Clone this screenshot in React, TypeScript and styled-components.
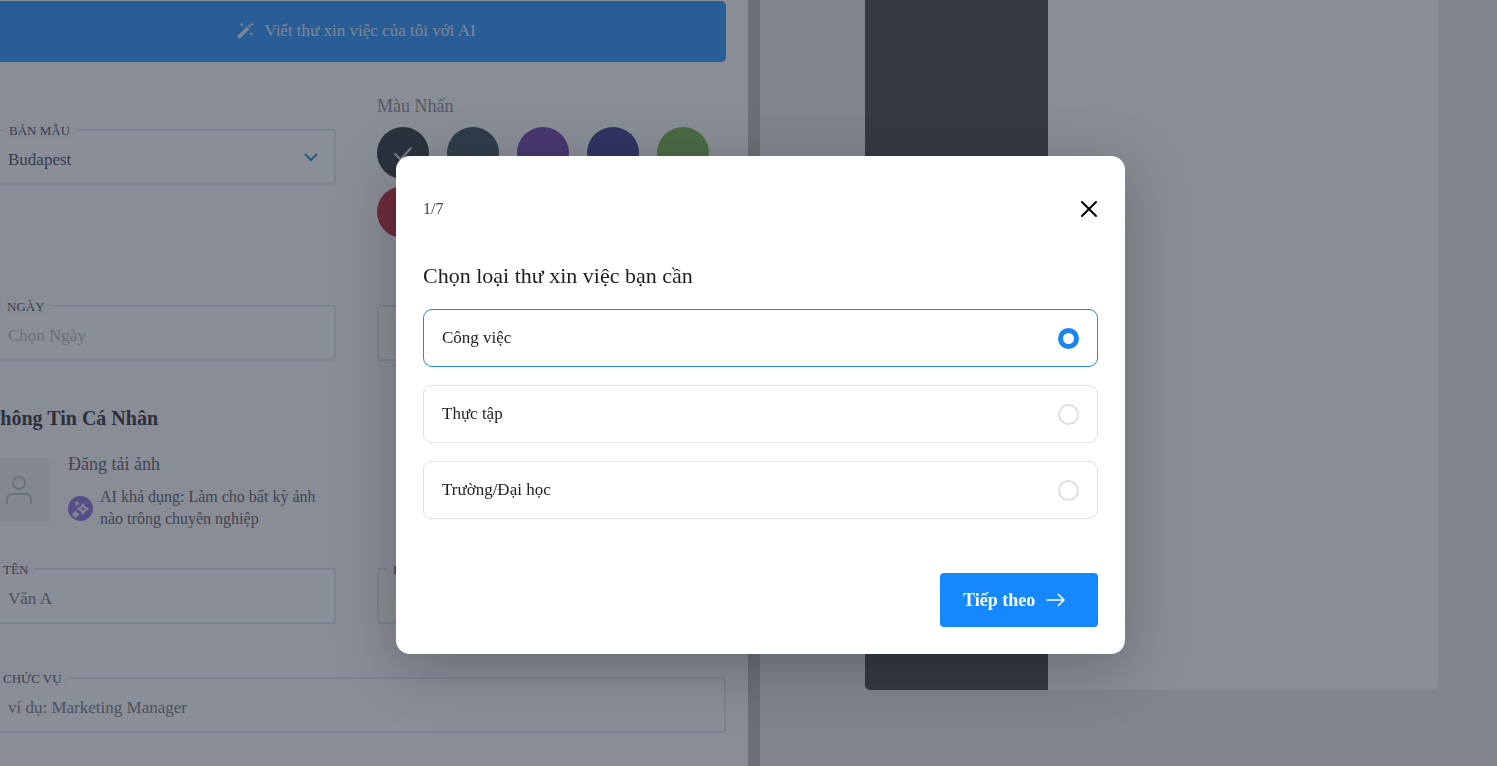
import React, { useState } from "react";
import styled, { createGlobalStyle } from "styled-components";

const GlobalStyle = createGlobalStyle`
  *, *::before, *::after { box-sizing: border-box; }
  body {
    margin: 0;
    font-family: "Liberation Serif", "Times New Roman", serif;
    font-size: 17px;
    line-height: 20px;
    color: #6a6a76;
    background: #ebedf3;
  }
  button, input, select { font: inherit; color: inherit; }
`;

const Page = styled.main`
  display: grid;
  grid-template-columns: 760fr 737fr;
  height: 100vh;
  overflow: hidden;
`;

const EditorPane = styled.section`
  display: flex;
  min-width: 0;
  overflow: hidden;
  background: #fdfdff;
`;

const Form = styled.form`
  flex: 1;
  min-width: 0;
  margin-left: -13px;
  padding: 1px 22px 32px 0;
`;

const ScrollTrack = styled.div`
  flex: 0 0 12px;
  background: #c2c3be;
`;

const AiButton = styled.button`
  display: flex;
  align-items: center;
  justify-content: center;
  gap: 10px;
  width: 100%;
  height: 61px;
  padding: 0 0 2px;
  border: 0;
  border-radius: 5px;
  background: #3a9cff;
  color: #e6ecf6;
`;

const Row = styled.div<{ $top: number }>`
  display: grid;
  grid-template-columns: 1fr 1fr;
  column-gap: 41px;
  margin-top: ${(p) => p.$top}px;
`;

const FieldBox = styled.div<{ $top?: number }>`
  position: relative;
  height: 56px;
  margin-top: ${(p) => p.$top ?? 0}px;
`;

const controlStyles = `
  display: block;
  width: 100%;
  height: 100%;
  padding: 5px 19px 0;
  border: 2px solid #e7e8f6;
  border-radius: 3px;
  background: #fff;
  appearance: none;
  outline: 0;
`;

const TextInput = styled.input<{ $pale?: boolean }>`
  ${controlStyles}
  &::placeholder {
    color: ${(p) => (p.$pale ? "#bfc0cf" : "#85868f")};
    opacity: 1;
  }
`;

const Select = styled.select`
  ${controlStyles}
  color: #5b5b70;
`;

const FieldLabel = styled.label<{ $inset: number }>`
  position: absolute;
  top: -7px;
  left: ${(p) => p.$inset}px;
  padding: 0 6px;
  background: #fdfdff;
  font-size: 13px;
  line-height: 18px;
  color: #5b5b70;
  text-transform: uppercase;
`;

const Chevron = styled.svg`
  position: absolute;
  top: 23px;
  right: 17px;
  pointer-events: none;
`;

const SwatchTitle = styled.div`
  margin-bottom: 11px;
  font-size: 18px;
  color: #9394a0;
`;

const Swatches = styled.div`
  display: flex;
  flex-wrap: wrap;
  gap: 7px 18px;
  height: 111px;
`;

const Swatch = styled.button<{ $color: string }>`
  display: grid;
  place-items: center;
  width: 52px;
  height: 52px;
  padding: 0;
  border: 0;
  border-radius: 50%;
  background: ${(p) => p.$color};
`;

const SectionTitle = styled.h2`
  margin: 45px 0 0;
  font-size: 20px;
  line-height: 24px;
  color: #43434b;
`;

const PhotoRow = styled.div`
  display: flex;
  gap: 18px;
  margin: 24px 0 38px;
`;

const PhotoTile = styled.div`
  display: grid;
  place-items: center;
  width: 63px;
  height: 64px;
  margin-top: 4px;
  border-radius: 3px;
  background: #f2f3f9;
`;

const PhotoText = styled.div`
  font-size: 18px;
  color: #6c6d77;
`;

const AiHint = styled.div`
  display: flex;
  align-items: center;
  gap: 7px;
  width: 250px;
  margin-top: 12px;
  font-size: 16px;
  line-height: 22px;
`;

const PreviewPane = styled.section`
  min-width: 0;
  padding: 0 59px 76px 105px;
`;

const Sheet = styled.div`
  display: grid;
  grid-template-columns: 32% 1fr;
  height: 100%;
  overflow: hidden;
  border-radius: 0 0 5px 5px;
  background: #fdfeff;
`;

const SheetSidebar = styled.div`
  background: #585658;
`;

const Overlay = styled.div`
  position: fixed;
  inset: 0;
  display: grid;
  place-items: center;
  padding: 44px 0 0 24px;
  background: rgba(22, 30, 46, 0.5);
`;

const Dialog = styled.div`
  width: 729px;
  max-width: 100%;
  padding: 27px;
  border-radius: 14px;
  background: #fff;
  box-shadow: 0 14px 60px rgba(0, 0, 0, 0.25);
  color: #1d1e24;
`;

const DialogHeader = styled.header`
  display: flex;
  align-items: center;
  justify-content: space-between;
  height: 52px;
  margin-bottom: 26px;
  font-size: 16px;
  color: #44454b;
`;

const CloseButton = styled.button`
  display: grid;
  place-items: center;
  width: 18px;
  height: 18px;
  padding: 0;
  border: 0;
  background: none;
  color: #000;
`;

const Options = styled.fieldset`
  display: grid;
  gap: 18px;
  margin: 0;
  padding: 0;
  border: 0;
`;

const Question = styled.legend`
  margin-bottom: 18px;
  padding: 0;
  font-size: 22px;
  line-height: 30px;
`;

const Option = styled.label<{ $selected: boolean }>`
  display: flex;
  align-items: center;
  justify-content: space-between;
  height: 58px;
  padding: 0 18px;
  border: 1px solid ${(p) => (p.$selected ? "#2a87cf" : "#e0e0e2")};
  border-radius: 9px;
`;

const Radio = styled.input`
  appearance: none;
  width: 21px;
  height: 21px;
  margin: 0;
  border: 2px solid #dfdfe1;
  border-radius: 50%;
  &:checked {
    border: 5px solid #1b84f2;
  }
`;

const DialogFooter = styled.footer`
  display: flex;
  justify-content: flex-end;
  margin-top: 54px;
`;

const NextButton = styled.button`
  display: flex;
  align-items: center;
  gap: 11px;
  width: 158px;
  height: 54px;
  padding: 0 23px;
  border: 0;
  border-radius: 4px;
  background: #1688fe;
  color: #fff;
  font-size: 18px;
  font-weight: 700;
`;

const colors = ["#44484e", "#485e66", "#7a52b2", "#4a4c98", "#7eb85c", "#c63c4a"];
const kinds = ["Công việc", "Thực tập", "Trường/Đại học"];

const WandIcon = () => (
  <svg width="17" height="17" viewBox="0 0 18 18" fill="currentColor" aria-hidden="true">
    <path d="M10.300 4.800 13.200 7.700 3.800 17Q2.500 18 1.200 16.800 0 15.500 1 14.200Z" />
    <path d="m11.200 4 .8-.8q1.100-.7 2 .2t.2 2l-.8.8Z" />
    <path d="m5 .6.7 1.500 1.500.7-1.500.7L5 5l-.7-1.500-1.500-.7 1.500-.7ZM15.600.2l.7 1.500 1.500.7-1.500.7-.7 1.500-.7-1.500-1.500-.7 1.500-.7ZM15 10.500l.7 1.500 1.500.7-1.500.7-.7 1.500-.7-1.500-1.500-.7 1.500-.7Z" />
  </svg>
);

const PersonIcon = () => (
  <svg width="28" height="30" viewBox="0 0 28 30" fill="none" stroke="#c3c5d3" strokeWidth="2" aria-hidden="true">
    <circle cx="14" cy="8" r="6" />
    <path d="M2 29v-5a5 5 0 0 1 5-5h14a5 5 0 0 1 5 5v5" />
  </svg>
);

const SparkBadge = () => (
  <svg width="25" height="25" viewBox="0 0 25 25" aria-hidden="true">
    <circle cx="12.500" cy="12.500" r="12.500" fill="#957fe4" />
    <path d="M15 8.200Q16 11.800 19.600 12.800 16 13.800 15 17.400 14 13.800 10.400 12.800 14 11.800 15 8.200Z" fill="none" stroke="#eceaf7" strokeWidth="2" strokeLinejoin="round" />
    <path d="M7.600 14.800Q8.400 17.600 11.200 18.400 8.400 19.200 7.600 22 6.800 19.200 4 18.400 6.800 17.600 7.600 14.800Z" fill="#eceaf7" stroke="#eceaf7" strokeLinejoin="round" />
    <circle cx="9" cy="7.500" r="2" fill="#eceaf7" />
  </svg>
);

export default function App() {
  const [kind, setKind] = useState(kinds[0]);

  return (
    <>
      <GlobalStyle />
      <Page>
        <EditorPane>
          <Form>
            <AiButton type="button">
              <WandIcon />
              Viết thư xin việc của tôi với AI
            </AiButton>

            <Row $top={34}>
              <FieldBox $top={33}>
                <Select id="template">
                  <option>Budapest</option>
                </Select>
                <FieldLabel htmlFor="template" $inset={16}>Bản mẫu</FieldLabel>
                <Chevron width="16" height="10" viewBox="0 0 16 10" fill="none" stroke="#2c9cc0" strokeWidth="2">
                  <path d="m2 2 6 6 6-6" />
                </Chevron>
              </FieldBox>
              <div>
                <SwatchTitle>Màu Nhấn</SwatchTitle>
                <Swatches>
                  {colors.map((color, i) => (
                    <Swatch key={color} type="button" $color={color} aria-label={`Màu ${i + 1}`}>
                      {i === 0 && (
                        <svg width="20" height="16" viewBox="0 0 20 16" fill="none" stroke="#dfe1e6" strokeWidth="2">
                          <path d="m1.500 8.500 6 6L18.500 2.500" />
                        </svg>
                      )}
                    </Swatch>
                  ))}
                </Swatches>
              </div>
            </Row>

            <Row $top={67}>
              <FieldBox>
                <TextInput id="date" placeholder="Chọn Ngày" $pale />
                <FieldLabel htmlFor="date" $inset={14}>Ngày</FieldLabel>
              </FieldBox>
              <FieldBox>
                <TextInput aria-label="Địa điểm" />
              </FieldBox>
            </Row>

            <SectionTitle>Thông Tin Cá Nhân</SectionTitle>
            <PhotoRow>
              <PhotoTile>
                <PersonIcon />
              </PhotoTile>
              <PhotoText>
                Đăng tải ảnh
                <AiHint>
                  <SparkBadge />
                  <span>
                    AI khả dụng: Làm cho bất kỳ ảnh
                    <br />
                    nào trông chuyên nghiệp
                  </span>
                </AiHint>
              </PhotoText>
            </PhotoRow>

            <Row $top={0}>
              <FieldBox>
                <TextInput id="first" placeholder="Văn A" />
                <FieldLabel htmlFor="first" $inset={10}>Tên</FieldLabel>
              </FieldBox>
              <FieldBox>
                <TextInput id="email" />
                <FieldLabel htmlFor="email" $inset={10}>Email</FieldLabel>
              </FieldBox>
            </Row>

            <FieldBox $top={53}>
              <TextInput id="position" placeholder="ví dụ: Marketing Manager" />
              <FieldLabel htmlFor="position" $inset={10}>Chức vụ</FieldLabel>
            </FieldBox>
          </Form>
          <ScrollTrack />
        </EditorPane>

        <PreviewPane>
          <Sheet>
            <SheetSidebar />
          </Sheet>
        </PreviewPane>
      </Page>

      <Overlay>
        <Dialog role="dialog" aria-modal="true">
          <DialogHeader>
            1/7
            <CloseButton type="button" aria-label="Đóng">
              <svg width="18" height="18" viewBox="0 0 18 18" fill="none" stroke="currentColor" strokeWidth="2" strokeLinecap="round">
                <path d="M2 2 16 16M16 2 2 16" />
              </svg>
            </CloseButton>
          </DialogHeader>
          <Options>
            <Question>Chọn loại thư xin việc bạn cần</Question>
            {kinds.map((k) => (
              <Option key={k} $selected={k === kind}>
                {k}
                <Radio type="radio" name="kind" checked={k === kind} onChange={() => setKind(k)} />
              </Option>
            ))}
          </Options>
          <DialogFooter>
            <NextButton type="button">
              Tiếp theo
              <svg width="19" height="14" viewBox="0 0 19 14" fill="none" stroke="currentColor" strokeWidth="1.600" strokeLinecap="round" strokeLinejoin="round">
                <path d="M1 7h17M12.500 1.500 18 7l-5.500 5.500" />
              </svg>
            </NextButton>
          </DialogFooter>
        </Dialog>
      </Overlay>
    </>
  );
}
